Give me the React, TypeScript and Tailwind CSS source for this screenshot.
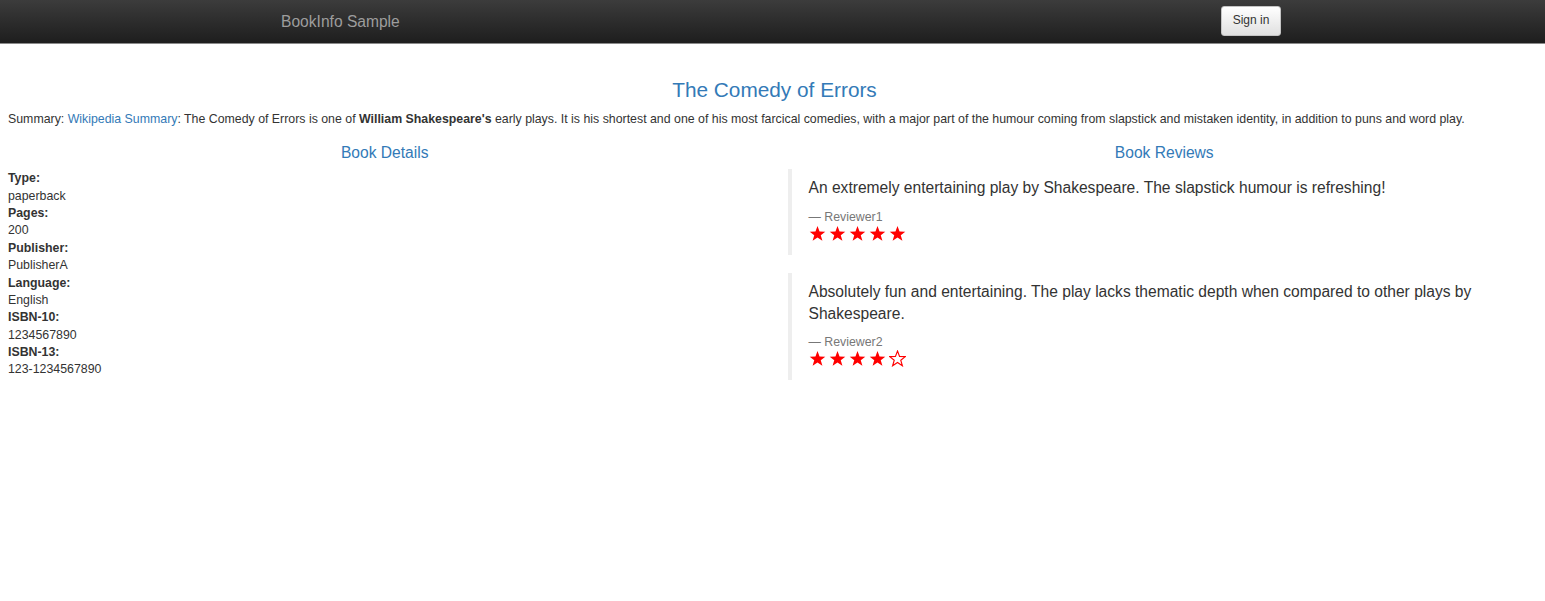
import React from 'react'

const details = [
  ['Type:', 'paperback'],
  ['Pages:', '200'],
  ['Publisher:', 'PublisherA'],
  ['Language:', 'English'],
  ['ISBN-10:', '1234567890'],
  ['ISBN-13:', '123-1234567890'],
]

const reviews = [
  {
    text: 'An extremely entertaining play by Shakespeare. The slapstick humour is refreshing!',
    by: 'Reviewer1',
    stars: 5,
  },
  {
    text: 'Absolutely fun and entertaining. The play lacks thematic depth when compared to other plays by Shakespeare.',
    by: 'Reviewer2',
    stars: 4,
  },
]

const Star = ({ filled }: { filled: boolean }) => (
  <svg width="17" height="17" viewBox="0 0 24 23" className="block">
    <polygon
      points="12,1 14.9,8.6 23,8.9 16.6,13.9 18.9,21.8 12,17.2 5.1,21.8 7.4,13.9 1,8.9 9.1,8.6"
      fill={filled ? '#ff0000' : 'none'}
      stroke="#ff0000"
      strokeWidth={filled ? 0 : 1.6}
    />
  </svg>
)

export default function App() {
  return (
    <div className="min-h-[601px] bg-white font-['Liberation_Sans',Arial,sans-serif] text-[12.35px] leading-[17.36px] text-[#333]">
      <nav className="flex h-[44px] items-center justify-between border-b border-[#8a8a8a] bg-gradient-to-b from-[#3c3c3c] to-[#1e1e1e] pl-[281px] pr-[264px]">
        <span className="text-[15.6px] text-[#9d9d9d]">BookInfo Sample</span>
        <button className="mb-[1px] h-[30px] w-[60px] rounded-[3px] border border-[#c4c4c4] bg-gradient-to-b from-white to-[#e0e0e0] text-[12px] text-[#333]">
          Sign in
        </button>
      </nav>

      <div className="px-2 pt-[34px]">
        <h3 className="pl-[4px] text-center text-[20.8px] leading-[23px] text-[#337ab7]">The Comedy of Errors</h3>
        <p className="mt-[10px]">
          Summary: <a className="text-[#337ab7]">Wikipedia Summary</a>: The Comedy of Errors is one of{' '}
          <b>William Shakespeare's</b> early plays. It is his shortest and one of his most farcical comedies, with a
          major part of the humour coming from slapstick and mistaken identity, in addition to puns and word play.
        </p>

        <div className="mt-[16px] grid grid-cols-2">
          <div className="pr-2">
            <h4 className="pr-[3px] text-center text-[15.6px] leading-[17px] text-[#337ab7]">Book Details</h4>
            <dl className="mt-[9px]">
              {details.map(([k, v]) => (
                <div key={k}>
                  <dt className="font-bold">{k}</dt>
                  <dd>{v}</dd>
                </div>
              ))}
            </dl>
          </div>
          <div className="pl-[15px]">
            <h4 className="pl-[4px] text-center text-[15.6px] leading-[17px] text-[#337ab7]">Book Reviews</h4>
            <div className="mt-[8px] flex flex-col gap-[18px]">
              {reviews.map(r => (
                <blockquote key={r.by} className="border-l-[4px] border-[#eee] pt-[8px] pb-[13px] pl-[17px] pr-[40px]">
                  <p className="text-[15.6px] leading-[21.7px]">{r.text}</p>
                  <div className="mt-[10px] text-[12.35px] leading-[17px] text-[#777]">— {r.by}</div>
                  <div className="-mt-[1px] flex gap-[3px]">
                    {[0, 1, 2, 3, 4].map(i => (
                      <Star key={i} filled={i < r.stars} />
                    ))}
                  </div>
                </blockquote>
              ))}
            </div>
          </div>
        </div>
      </div>
    </div>
  )
}
